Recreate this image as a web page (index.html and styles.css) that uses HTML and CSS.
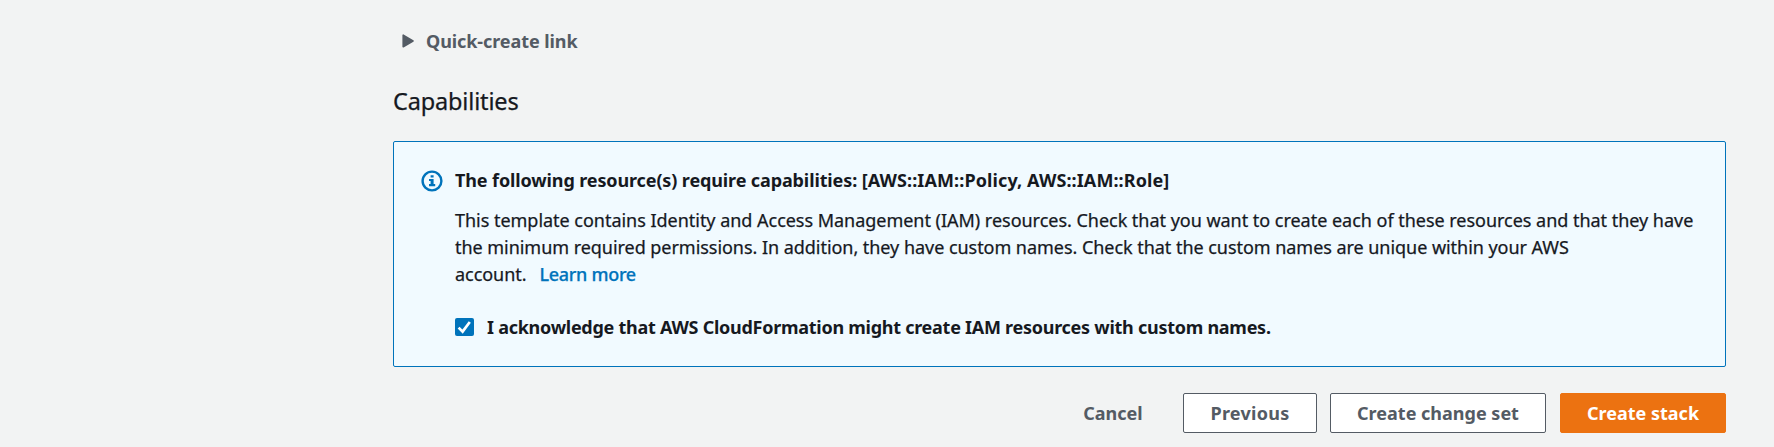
FILE: index.html
```html
<!DOCTYPE html>
<html lang="en">
<head>
<meta charset="utf-8">
<title>Create stack</title>
<link rel="stylesheet" href="styles.css">
</head>
<body>
<main class="page">
  <div class="expander">
    <svg class="caret" width="12" height="14" viewBox="0 0 12 14"><path d="M1.2 1.2v11.6L11 7z" fill="#545b64" stroke="#545b64" stroke-width="1.6" stroke-linejoin="round"/></svg>
    <span class="expander-label">Quick-create link</span>
  </div>
  <h2 class="section-title">Capabilities</h2>
  <section class="alert">
    <svg class="info" width="22" height="22" viewBox="0 0 22 22">
      <circle cx="11" cy="11" r="9.4" fill="none" stroke="#0073bb" stroke-width="2.4"/>
      <path d="M9.6 5.2h3v2.4h-3zM8 9h4.6v5h1.6v2.2H8V14h1.6v-2.9H8z" fill="#0073bb"/>
    </svg>
    <div class="alert-body">
      <div class="alert-title"><span class="alert-lead">The following resource(s) require capabilities: </span><span class="alert-names">[AWS::IAM::Policy, AWS::IAM::Role]</span></div>
      <div class="alert-text">
        <div class="line-a">This template contains Identity and Access Management (IAM) resources. Check that you want to create each of these resources and that they have</div>
        <div class="line-b">the minimum required permissions. In addition, they have custom names. Check that the custom names are unique within your AWS</div>
        <div class="line-c">account.<a class="link">Learn more</a></div>
      </div>
      <label class="check">
        <svg class="box" width="19" height="18" viewBox="0 0 19 18"><rect width="19" height="18" rx="2" fill="#0073bb"/><path d="M3.6 9.6l4 4L14.8 4" fill="none" stroke="#fff" stroke-width="2.7"/></svg>
        <span class="check-label">I acknowledge that AWS CloudFormation might create IAM resources with custom names.</span>
      </label>
    </div>
  </section>
  <div class="actions">
    <button class="btn btn-link">Cancel</button>
    <button class="btn btn-previous">Previous</button>
    <button class="btn btn-change">Create change set</button>
    <button class="btn btn-primary">Create stack</button>
  </div>
</main>
</body>
</html>
```
FILE: styles.css
```css
* { box-sizing: border-box; }
body {
  margin: 0;
  background: #f2f3f3;
  color: #16191f;
  font: 18px/27px "Noto Sans", "Open Sans", sans-serif;
}
.page {
  width: 1333px;
  margin-left: 393px;
  padding-top: 28px;
  white-space: nowrap;
}
.expander {
  display: flex;
  align-items: center;
  height: 27px;
  padding-left: 9px;
  color: #545b64;
  font-weight: 700;
}
.caret { margin: 0 12px 2px 0; }
.expander-label { letter-spacing: -0.08px; }
.section-title {
  margin: 28px 0 0;
  font-size: 23.5px;
  line-height: 36px;
  font-weight: 400;
  letter-spacing: -0.15px;
  -webkit-text-stroke: 0.25px #16191f;
}
.alert {
  display: flex;
  height: 226px;
  margin-top: 22px;
  padding: 25px 27px 0;
  background: #f1faff;
  border: 1px solid #0073bb;
  border-radius: 2px;
}
.info { margin: 3px 12px 0 0; flex: none; }
.alert-title { font-weight: 700; }
.alert-lead { letter-spacing: -0.12px; }
.alert-names { letter-spacing: 0.1px; }
.alert-text { margin-top: 13px; -webkit-text-stroke: 0.25px currentColor; }
.line-a { letter-spacing: -0.025px; }
.line-b { letter-spacing: -0.042px; }
.line-c { letter-spacing: -0.05px; }
.link {
  margin-left: 13px;
  color: #0073bb;
  font-weight: 500;
  letter-spacing: -0.3px;
}
.check {
  display: flex;
  align-items: center;
  margin-top: 26px;
}
.box { margin-bottom: 2px; }
.check-label {
  margin-left: 13px;
  font-weight: 700;
  letter-spacing: -0.265px;
}
.actions {
  display: flex;
  justify-content: flex-end;
  margin-top: 26px;
}
.btn {
  height: 40px;
  padding: 0;
  border: 1px solid #545b64;
  border-radius: 2px;
  background: #fff;
  color: #545b64;
  font: 700 18px/38px "Noto Sans", "Open Sans", sans-serif;
}
.btn-link {
  width: 116px;
  margin-right: 12px;
  border-color: transparent;
  background: transparent;
}
.btn-previous { width: 134px; margin-right: 13px; letter-spacing: 0.28px; }
.btn-change { width: 216px; margin-right: 14px; }
.btn-primary { width: 166px; border-color: #ec7211; background: #ec7211; color: #fff; }
```
